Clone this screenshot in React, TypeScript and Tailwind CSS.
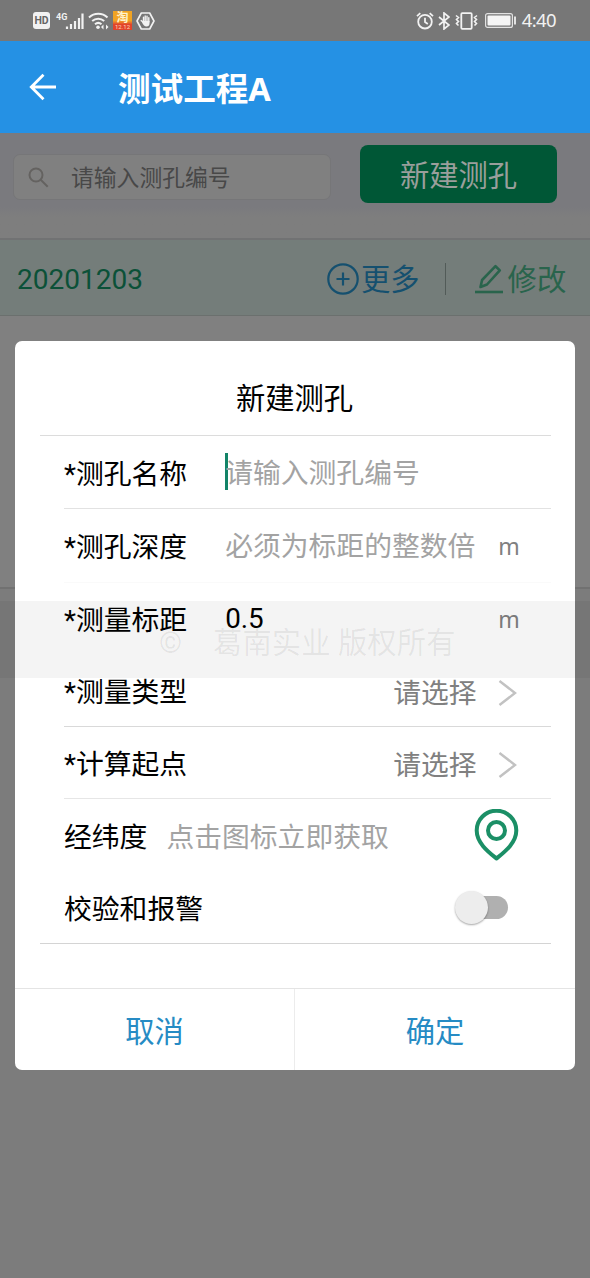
import { useState } from "react";
import type { ReactNode } from "react";

const StatusBar = () => (
  <div className="flex h-[41px] items-center justify-between bg-[#777777] pr-[34px] pl-[33px] text-white">
    <div className="flex items-center">
      <span className="flex h-[17px] w-[17px] items-center justify-center rounded-[3px] bg-[#f2f2f2] font-[Roboto] text-[10.500px] font-bold text-[#666]">
        HD
      </span>
      <svg width="29" height="20" viewBox="0 0 29 20" className="ml-[5px]">
        <text x="1" y="9" fontSize="9" fontWeight="700" fill="#f2f2f2" fontFamily="Roboto">
          4G
        </text>
        <path
          d="M12 18v-2.500M16 18v-5M20 18v-8M24 18v-11M27.500 18v-15.500"
          stroke="#f2f2f2"
          strokeWidth="2.200"
        />
      </svg>
      <svg width="21" height="19" viewBox="0 0 21 19" className="ml-1" fill="none">
        <path
          d="M1 6.500a13.500 13.500 0 0 1 18.500 0M4.200 10a9 9 0 0 1 12 0M7 13.300a5 5 0 0 1 6.500 0"
          stroke="#f2f2f2"
          strokeWidth="2"
        />
        <circle cx="10" cy="16.200" r="1.800" fill="#f2f2f2" />
        <path d="M13 16l2.500-2.500v5zM20.500 16l-2.500-2.500v5z" fill="#f2f2f2" />
      </svg>
      <span className="ml-[4px] flex h-[19px] w-[19px] flex-col items-center bg-gradient-to-b from-[#f0a323] from-50% to-[#e2442b] to-70% font-['Noto_Sans_CJK_SC']">
        <span className="text-[12px] leading-[12px] font-bold text-[#fff3cf]">淘</span>
        <span className="font-[Roboto] text-[6px] leading-[7px] text-[#ffd9b8]">12.12</span>
      </span>
      <svg width="19" height="18" viewBox="0 0 19 18" className="ml-[4px]" fill="none">
        <path d="M5.300 1h8.400L18 9l-4.300 8H5.300L1 9z" stroke="#f2f2f2" strokeWidth="1.600" strokeLinejoin="round" />
        <path
          d="M5.200 8.600l2.200 1.600M7.500 10V5.300M9.200 9V4M11 9V4.300M12.800 10V5.800"
          stroke="#f2f2f2"
          strokeWidth="1.400"
          strokeLinecap="round"
        />
        <path d="M6.800 9h6.700v2.500c0 2-1.200 3-3 3-2 0-3-1.500-4.500-4z" fill="#f2f2f2" />
      </svg>
    </div>
    <div className="flex items-center">
      <svg width="18" height="18" viewBox="0 0 18 18" fill="none" stroke="#f2f2f2" strokeWidth="1.800">
        <circle cx="9" cy="9.700" r="6.800" />
        <path d="M9 5.800v4.200l2.800 2M1 4.200L4.300 1.200M17 4.200l-3.300-3" />
      </svg>
      <svg width="12" height="18" viewBox="0 0 12 18" className="ml-[4px]" fill="none" stroke="#f2f2f2" strokeWidth="1.700">
        <path d="M1 5l10 8-5 4V1l5 4-10 8" />
      </svg>
      <svg width="23" height="18" viewBox="0 0 23 18" className="ml-[5px]" fill="none" stroke="#f2f2f2">
        <rect x="6.300" y="1.200" width="10.400" height="15.600" rx="1" strokeWidth="1.800" />
        <path
          d="M1 3.500l2.500 2-2 2 2 2-2 2 2 2M22 3.500l-2.500 2 2 2-2 2 2 2-2 2"
          strokeWidth="1.600"
        />
      </svg>
      <svg width="32" height="15" viewBox="0 0 32 15" className="ml-[7px]" fill="none">
        <rect x=".6" y=".6" width="26.800" height="13.800" rx="2" stroke="#e2e2e2" strokeWidth="1.200" />
        <rect x="2.500" y="2.500" width="23" height="10" rx="1" fill="#f5f5f5" />
        <path d="M30 3.500v8" stroke="#e2e2e2" strokeWidth="2" />
      </svg>
      <span className="ml-[5px] font-['Noto_Sans'] text-[18.500px] leading-none tracking-[-0.600px] text-[#f2f2f2]">4:40</span>
    </div>
  </div>
);

const Chevron = () => (
  <svg width="20" height="28" viewBox="0 0 20 28" fill="none" className="mt-[4px] ml-[21px]">
    <path d="M1.500 2l15.500 12L1.500 26" stroke="#c2c2c2" strokeWidth="2.400" />
  </svg>
);

type RowProps = {
  label: string;
  line?: string;
  height: string;
  children: ReactNode;
};

const Row = ({ label, line = "border-transparent", height, children }: RowProps) => (
  <div className={`ml-[49px] mr-[24px] flex items-center border-b ${height} ${line}`}>
    <span className="shrink-0 pt-[5px] text-black">{label}</span>
    {children}
  </div>
);

const App = () => {
  const [name, setName] = useState("");
  const [depth, setDepth] = useState("");
  const [checked, setChecked] = useState(false);

  return (
    <div className="relative h-[1278px] w-[590px] overflow-hidden bg-[#7c7c7c] font-[Roboto,'Noto_Sans_CJK_SC',sans-serif]">
      <StatusBar />
      <header className="flex h-[92px] items-center bg-[#2591e4] pl-[29px]">
        <svg width="28" height="28" viewBox="0 0 28 28" fill="none">
          <path d="M27 14H2.500M14.500 1.800L2.300 14l12.200 12.200" stroke="#fff" strokeWidth="2.800" />
        </svg>
        <h1 className="ml-[61px] pt-[3px] font-['Noto_Sans','Noto_Sans_CJK_SC',sans-serif] text-[32.600px] leading-[40px] font-bold text-white">
          测试工程A
        </h1>
      </header>

      <div className="flex h-[107px] border-b-2 border-[#717273] bg-gradient-to-b from-[#7a7a7e] from-70% to-[#7e7e7e] to-80% pt-3">
        <div className="mt-[9px] ml-[13px] flex h-[46px] w-[318px] items-center rounded-[7px] border border-[#767678] bg-[#808080] pl-[14px]">
          <svg width="21" height="21" viewBox="0 0 21 21" fill="none" stroke="#646260" strokeWidth="2">
            <circle cx="8" cy="8" r="6.500" />
            <path d="M12.700 12.700l7 7" />
          </svg>
          <span className="ml-[22px] pt-[4px] text-[22.800px] text-[#484848]">请输入测孔编号</span>
        </div>
        <button className="ml-[29px] h-[58px] w-[197px] rounded-[8px] bg-[#005736] pt-[6px] text-[29.300px] text-[#9a9f9c]">
          新建测孔
        </button>
      </div>

      <div className="flex h-[76px] items-center border-b border-[#6b706e] bg-[#747d7a] pt-[2px] pl-[16px] text-[29.300px]">
        <span className="w-[311px] pt-[3px] pl-px text-[28px] text-[#0b5138]">20201203</span>
        <span className="flex items-center text-[#15506f]">
          <svg width="32" height="32" viewBox="0 0 32 32" fill="none" stroke="#15506f" strokeWidth="2.200">
            <circle cx="16" cy="16" r="14.700" />
            <path d="M16 9.500v13M9.500 16h13" />
          </svg>
          <span className="ml-[2px] pt-[5px]">更多</span>
        </span>
        <span className="ml-[25px] h-[32px] w-px bg-[#525b58]" />
        <span className="ml-[29px] flex items-center text-[#29644c]">
          <svg width="29" height="30" viewBox="0 0 29 30" fill="none" stroke="#29644c" strokeWidth="2.600">
            <path d="M20.500 2.200l4.300 4.200L12 20.500l-6.500 2.500 1.600-7z" strokeLinejoin="round" />
            <path d="M0 28h28" />
          </svg>
          <span className="ml-[4px] pt-[5px]">修改</span>
        </span>
      </div>
      <div className="h-[273px] border-b-2 border-[#717171] bg-[#808080]" />

      <div className="absolute top-[341px] left-[15px] flex h-[729px] w-[560px] flex-col rounded-[7px] bg-white text-[27.800px]">
        <h2 className="mr-[24px] ml-[25px] flex h-[95px] items-center justify-center border-b border-[#dcdcdc] pt-[23px] pr-[2px] text-[29.300px] text-black">
          新建测孔
        </h2>
        <Row label="*测孔名称" height="h-[73px]" line="border-[#e2e2e2]">
          <span className="mb-[2px] ml-[38px] h-[37px] w-[3px] bg-[#138468]" />
          <input
            className="-ml-[3px] w-[290px] pt-[4px] outline-none placeholder:text-[#a3a3a3]"
            placeholder="请输入测孔编号"
            value={name}
            onChange={(e) => setName(e.target.value)}
          />
        </Row>
        <Row label="*测孔深度" height="h-[74px]" line="border-[#fafafa]">
          <input
            className="ml-[38px] w-[273px] pt-[3px] outline-none placeholder:text-[#a3a3a3]"
            placeholder="必须为标距的整数倍"
            value={depth}
            onChange={(e) => setDepth(e.target.value)}
          />
          <span className="pt-[2px] font-['Noto_Sans'] text-[23px] text-[#808080]">m</span>
        </Row>
        <Row label="*测量标距" height="h-[72px]">
          <span className="ml-[38px] w-[273px] text-black">0.5</span>
          <span className="pt-[2px] font-['Noto_Sans'] text-[23px] text-[#808080]">m</span>
        </Row>
        <Row label="*测量类型" height="h-[72px]" line="border-[#d9d9d9]">
          <span className="ml-[206px] pt-[6px] text-[#808080]">请选择</span>
          <Chevron />
        </Row>
        <Row label="*计算起点" height="h-[72px]" line="border-[#e6e6e6]">
          <span className="ml-[206px] pt-[6px] text-[#808080]">请选择</span>
          <Chevron />
        </Row>
        <Row label="经纬度" height="h-[73px]">
          <span className="ml-[19px] w-[308px] pt-[5px] text-[#a3a3a3]">点击图标立即获取</span>
          <svg width="45" height="52" viewBox="0 0 44 52" fill="none" stroke="#1b8f66" strokeWidth="4">
            <path d="M22 49.500C14 43 2.200 34 2.200 21.500a19.800 19.800 0 0 1 39.600 0C41.800 34 30 43 22 49.500z" strokeLinejoin="round" />
            <circle cx="22" cy="21.500" r="8.500" />
          </svg>
        </Row>
        <div className="mr-[24px] ml-[25px] flex h-[72px] items-center border-b border-[#d4d4d4] pl-6">
          <span className="w-[391px] pt-[5px] text-black">校验和报警</span>
          <button
            className="relative flex h-[34px] w-[53px] items-center"
            onClick={() => setChecked(!checked)}
          >
            <span className="ml-[9px] h-[23px] w-[44px] rounded-full bg-[#b0b0b0]" />
            <span
              className={`absolute top-0 h-[33px] w-[33px] rounded-full bg-[#ededed] shadow-[0_1px_2px_rgba(0,0,0,0.35)] ${
                checked ? "right-0" : "left-0"
              }`}
            />
          </button>
        </div>
        <div className="mt-[44px] flex flex-1 border-t border-[#e4e4e4] text-[29.300px] text-[#268bc4]">
          <button className="w-[280px] border-r border-[#ececec] pt-[6px]">取消</button>
          <button className="flex-1 pt-[6px]">确定</button>
        </div>
      </div>

      <div className="pointer-events-none absolute top-[601px] left-0 flex h-[77px] w-[590px] items-center bg-black/[0.045] pt-[8px] pl-[159px] text-[29.300px] whitespace-pre text-black/[0.07]">
        <span className="w-[54px]">©</span>
        <span className="tracking-[0.100px]">葛南实业 版权所有</span>
      </div>
    </div>
  );
};

export default App;
